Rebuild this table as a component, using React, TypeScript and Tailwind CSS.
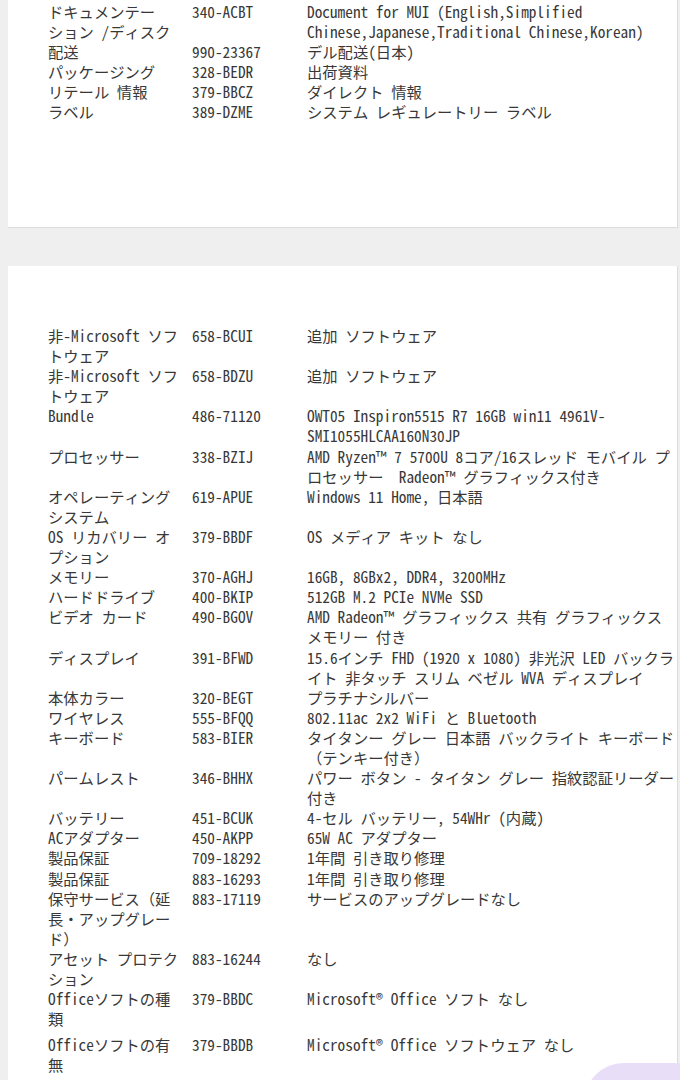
type Row = {
  name: string[]
  code: string
  desc: string[]
  extra?: boolean
}

const firstRows: Row[] = [
  {
    name: ['ドキュメンテー', 'ション /ディスク'],
    code: '340-ACBT',
    desc: ['Document for MUI (English,Simplified', 'Chinese,Japanese,Traditional Chinese,Korean)'],
  },
  { name: ['配送'], code: '990-23367', desc: ['デル配送(日本)'] },
  { name: ['パッケージング'], code: '328-BEDR', desc: ['出荷資料'] },
  { name: ['リテール 情報'], code: '379-BBCZ', desc: ['ダイレクト 情報'] },
  { name: ['ラベル'], code: '389-DZME', desc: ['システム レギュレートリー ラベル'] },
]

const secondRows: Row[] = [
  { name: ['非-Microsoft ソフ', 'トウェア'], code: '658-BCUI', desc: ['追加 ソフトウェア'] },
  { name: ['非-Microsoft ソフ', 'トウェア'], code: '658-BDZU', desc: ['追加 ソフトウェア'] },
  {
    name: ['Bundle'],
    code: '486-71120',
    desc: ['OWT05 Inspiron5515 R7 16GB win11 4961V-', 'SMI1055HLCAA160N30JP'],
  },
  {
    name: ['プロセッサー'],
    code: '338-BZIJ',
    desc: ['AMD Ryzen™ 7 5700U 8コア/16スレッド モバイル プ', 'ロセッサー  Radeon™ グラフィックス付き'],
  },
  { name: ['オペレーティング', 'システム'], code: '619-APUE', desc: ['Windows 11 Home, 日本語'] },
  { name: ['OS リカバリー オ', 'プション'], code: '379-BBDF', desc: ['OS メディア キット なし'] },
  { name: ['メモリー'], code: '370-AGHJ', desc: ['16GB, 8GBx2, DDR4, 3200MHz'] },
  { name: ['ハードドライブ'], code: '400-BKIP', desc: ['512GB M.2 PCIe NVMe SSD'] },
  {
    name: ['ビデオ カード'],
    code: '490-BGOV',
    desc: ['AMD Radeon™ グラフィックス 共有 グラフィックス', 'メモリー 付き'],
  },
  {
    name: ['ディスプレイ'],
    code: '391-BFWD',
    desc: ['15.6インチ FHD (1920 x 1080) 非光沢 LED バックラ', 'イト 非タッチ スリム ベゼル WVA ディスプレイ'],
  },
  { name: ['本体カラー'], code: '320-BEGT', desc: ['プラチナシルバー'] },
  { name: ['ワイヤレス'], code: '555-BFQQ', desc: ['802.11ac 2x2 WiFi と Bluetooth'] },
  {
    name: ['キーボード'],
    code: '583-BIER',
    desc: ['タイタンー グレー 日本語 バックライト キーボード', '（テンキー付き）'],
  },
  {
    name: ['パームレスト'],
    code: '346-BHHX',
    desc: ['パワー ボタン - タイタン グレー 指紋認証リーダー', '付き'],
  },
  { name: ['バッテリー'], code: '451-BCUK', desc: ['4-セル バッテリー, 54WHr (内蔵)'] },
  { name: ['ACアダプター'], code: '450-AKPP', desc: ['65W AC アダプター'] },
  { name: ['製品保証'], code: '709-18292', desc: ['1年間 引き取り修理'] },
  { name: ['製品保証'], code: '883-16293', desc: ['1年間 引き取り修理'] },
  {
    name: ['保守サービス（延', '長・アップグレー', 'ド）'],
    code: '883-17119',
    desc: ['サービスのアップグレードなし'],
  },
  { name: ['アセット プロテク', 'ション'], code: '883-16244', desc: ['なし'] },
  {
    name: ['Officeソフトの種', '類'],
    code: '379-BBDC',
    desc: ['Microsoft® Office ソフト なし'],
    extra: true,
  },
  {
    name: ['Officeソフトの有', '無'],
    code: '379-BBDB',
    desc: ['Microsoft® Office ソフトウェア なし'],
    extra: true,
  },
  {
    name: ['セキュリティ ソフ', 'トウェア'],
    code: '658-BBRB',
    desc: ['McAfee® LiveSafe™ 12ヶ月 版'],
  },
]

function Lines({ lines }: { lines: string[] }) {
  return (
    <div className="flex flex-col">
      {lines.map((l, i) => (
        <span key={i} className="whitespace-pre">
          {l}
        </span>
      ))}
    </div>
  )
}

function SpecRow({ row }: { row: Row }) {
  return (
    <div className={row.extra ? 'flex pb-[6px]' : 'flex'}>
      <div className="w-[144px] shrink-0">
        <Lines lines={row.name} />
      </div>
      <div className="w-[115px] shrink-0 whitespace-pre">{row.code}</div>
      <div className="w-[380px] shrink-0">
        <Lines lines={row.desc} />
      </div>
    </div>
  )
}

export default function App() {
  return (
    <div className="relative flex h-[1080px] w-[680px] flex-col overflow-hidden bg-[#efefef] font-['Noto_Sans_Mono_CJK_JP','Noto_Sans_CJK_JP',monospace] text-[15.3px] leading-5 text-[#383838]">
      {/* Upper card, scrolled so only its tail shows */}
      <section className="ml-[8px] h-[228px] w-[670px] shrink-0 overflow-hidden border-r border-b border-[#dcdcdc] bg-white pt-[1px] pl-[40px]">
        {firstRows.map((r, i) => (
          <SpecRow key={i} row={r} />
        ))}
      </section>

      {/* Lower card */}
      <section className="mt-[38px] ml-[8px] w-[670px] flex-1 overflow-hidden border-r border-[#dcdcdc] bg-white pt-[59px] pl-[40px] leading-[20.1px]">
        {secondRows.map((r, i) => (
          <SpecRow key={i} row={r} />
        ))}
      </section>

      {/* Floating button peeking in at the corner */}
      <div className="absolute top-[1063px] left-[584px] h-[90px] w-[130px] rounded-[40px] bg-[#e8def8]" />
    </div>
  )
}
